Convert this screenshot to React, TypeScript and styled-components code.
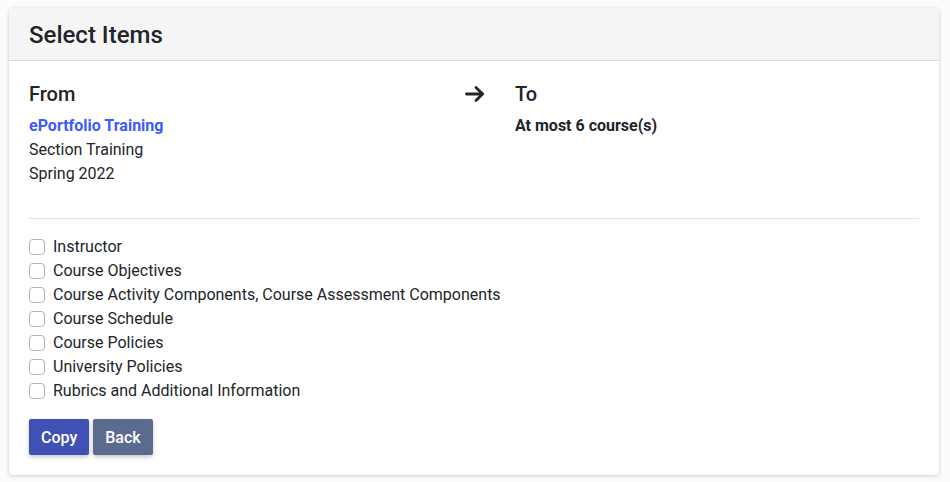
import React, { FunctionComponent, useState } from "react";
import styled, { createGlobalStyle } from "styled-components";

const ITEMS = [
  "Instructor",
  "Course Objectives",
  "Course Activity Components, Course Assessment Components",
  "Course Schedule",
  "Course Policies",
  "University Policies",
  "Rubrics and Additional Information",
];

const App: FunctionComponent = () => {
  // STATE //
  const [checked, setChecked] = useState<boolean[]>(ITEMS.map(() => false));

  const toggle = (i: number) => {
    setChecked((prev) => prev.map((v, j) => (j === i ? !v : v)));
  };

  return (
    <>
      <GlobalStyle />
      <Page>
        <Card>
          <CardHeader>
            <Title>Select Items</Title>
          </CardHeader>
          <CardBody>
            <Transfer>
              <Column>
                <ColumnTitle>From</ColumnTitle>
                <CourseLink href="#">ePortfolio Training</CourseLink>
                <Line>Section Training</Line>
                <Line>Spring 2022</Line>
              </Column>
              <ArrowCell>
                <svg width="24" height="24" viewBox="0 0 24 24" fill="none" stroke="#212529" strokeWidth="2.8" strokeLinecap="round" strokeLinejoin="round">
                  <path d="M3.5 12h16" />
                  <path d="M13 5.5l6.5 6.5-6.5 6.5" />
                </svg>
              </ArrowCell>
              <Column>
                <ColumnTitle>To</ColumnTitle>
                <Strong>At most 6 course(s)</Strong>
              </Column>
            </Transfer>
            <Divider />
            <CheckList>
              {ITEMS.map((label, i) => (
                <CheckRow key={label}>
                  <Box type="checkbox" checked={checked[i]} onChange={() => toggle(i)} />
                  {label}
                </CheckRow>
              ))}
            </CheckList>
            <Actions>
              <Button $variant="primary">Copy</Button>
              <Button $variant="secondary">Back</Button>
            </Actions>
          </CardBody>
        </Card>
      </Page>
    </>
  );
};

// STYLED COMPONENTS //
const GlobalStyle = createGlobalStyle`
  html, body {
    margin: 0;
    padding: 0;
    background: #fcfcfc;
  }
  body {
    font-family: Roboto, "Liberation Sans", Arial, sans-serif;
    color: #212529;
  }
`;

const Page = styled.div`
  padding: 8px 11px 7px 9px;
`;

const Card = styled.div`
  background: #fff;
  border-radius: 4px;
  box-shadow: 0 1px 4px rgba(0, 0, 0, 0.18), 0 0 2px rgba(0, 0, 0, 0.06);
  overflow: hidden;
`;

const CardHeader = styled.div`
  background: #f5f5f5;
  border-bottom: 1px solid #d9d9d9;
  height: 52px;
  padding: 0 20px;
  display: flex;
  align-items: center;
`;

const Title = styled.h1`
  margin: 2px 0 0;
  font-size: 24px;
  font-weight: 500;
  line-height: 1.2;
  color: #212529;
`;

const CardBody = styled.div`
  padding: 21px 20px 20px;
`;

const Transfer = styled.div`
  display: grid;
  grid-template-columns: 434px 52px 1fr;
`;

const Column = styled.div`
  display: flex;
  flex-direction: column;
  align-items: flex-start;
  font-size: 16px;
  line-height: 24px;
`;

const ColumnTitle = styled.h2`
  margin: 0 0 8px;
  font-size: 20px;
  font-weight: 500;
  line-height: 24px;
`;

const CourseLink = styled.a`
  color: #3d5afe;
  font-weight: 700;
  text-decoration: none;
`;

const Line = styled.span``;

const Strong = styled.span`
  font-weight: 700;
`;

const ArrowCell = styled.div`
  display: flex;
  justify-content: flex-start;
  height: 24px;
  align-items: center;
`;

const Divider = styled.hr`
  border: 0;
  border-top: 1px solid #e3e3e3;
  margin: 32px 0 16px;
`;

const CheckList = styled.div`
  display: flex;
  flex-direction: column;
`;

const CheckRow = styled.label`
  display: flex;
  align-items: center;
  gap: 8px;
  font-size: 16px;
  line-height: 24px;
  cursor: pointer;
`;

const Box = styled.input`
  appearance: none;
  margin: 0;
  width: 16px;
  height: 16px;
  border: 1px solid #adb5bd;
  border-radius: 4px;
  background: #fff;
  flex-shrink: 0;
  &:checked {
    background: #3f51b5;
    border-color: #3f51b5;
  }
`;

const Actions = styled.div`
  display: flex;
  gap: 4px;
  margin-top: 16px;
`;

const Button = styled.button<{ $variant: "primary" | "secondary" }>`
  height: 36px;
  padding: 0 12px;
  border: 0;
  border-radius: 2px;
  font-family: Roboto, "Liberation Sans", Arial, sans-serif;
  font-size: 16px;
  font-weight: 500;
  color: #fff;
  background: ${(p) => (p.$variant === "primary" ? "#3f51b5" : "#5b6a8f")};
  box-shadow: 0 2px 4px rgba(0, 0, 0, 0.22);
  cursor: pointer;
`;

export default App;
